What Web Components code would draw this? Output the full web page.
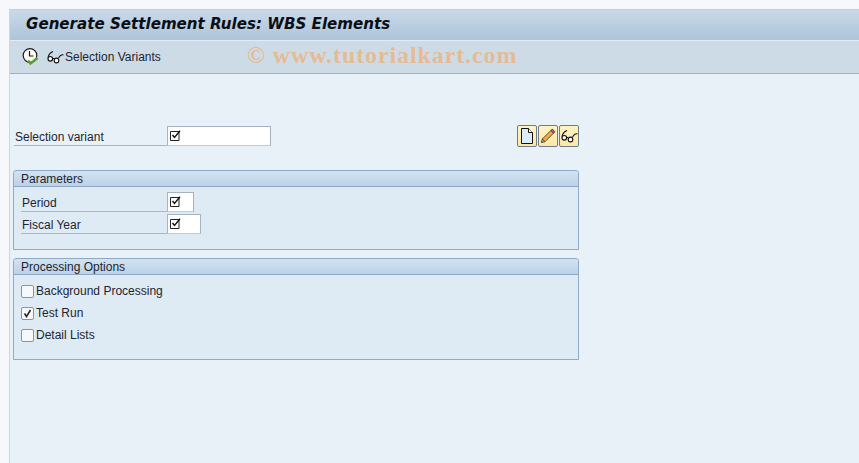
<!DOCTYPE html>
<html>
<head>
<meta charset="utf-8">
<style>
    html, body { margin: 0; height: 100%; }
    body {
        background: #f6f8fb;
        font: 12px "Liberation Sans", sans-serif;
        color: #1c2530;
        overflow: hidden;
    }
</style>
</head>
<body>
<sap-window>
    <sap-title slot="title">Generate Settlement Rules: WBS Elements</sap-title>
    <sap-toolbar slot="toolbar"></sap-toolbar>
    <sap-variant-row></sap-variant-row>
    <sap-group heading="Parameters" style="--group-h: 80px; --group-top: 23px">
        <sap-field label="Period" width="27"></sap-field>
        <sap-field label="Fiscal Year" width="34"></sap-field>
    </sap-group>
    <sap-group heading="Processing Options" style="--group-h: 102px; --group-top: 8px">
        <sap-check label="Background Processing"></sap-check>
        <sap-check label="Test Run" checked></sap-check>
        <sap-check label="Detail Lists"></sap-check>
    </sap-group>
</sap-window>

<script>
const ICONS = {
    required: `<svg width="11" height="11" viewBox="0 0 11 11"><path d="M.5 1.5h8.5v9H.5z" fill="#fff" stroke="#222"/><path d="M2.5 5l2 2.500L10 .8" fill="none" stroke="#111" stroke-width="1.400"/></svg>`,
    execute: `<svg width="18" height="18" viewBox="0 0 18 18"><circle cx="8" cy="7.500" r="6.800" fill="#fdfdf5" stroke="#1a1a1a" stroke-width="1.200"/><path d="M7.500 3v5h4" fill="none" stroke="#1a1a1a" stroke-width="1.200"/><path d="M6 12.500l2.500 3 7-5.500" fill="none" stroke="#5aa02c" stroke-width="2.600"/></svg>`,
    glasses: `<svg width="17" height="14" viewBox="0 0 17 14"><path d="M1 7.500C1.500 5 3.500 2.500 6 1.500M11.500 8C13 5.500 14 4 16.500 5" fill="none" stroke="#111" stroke-width="1.100"/><ellipse cx="3.300" cy="8.800" rx="2.300" ry="2.300" fill="#fff" stroke="#111" stroke-width="1.100"/><ellipse cx="9.500" cy="10.500" rx="2.300" ry="2.400" fill="#fff" stroke="#111" stroke-width="1.100"/><path d="M5.500 8l2 1" stroke="#111"/></svg>`,
    page: `<svg width="14" height="16" viewBox="0 0 14 16"><path d="M1.500.5h7l4 4v11h-11z" fill="#dcecf8" stroke="#111"/><path d="M8.500.5v4h4" fill="#fff" stroke="#111"/></svg>`,
    pencil: `<svg width="16" height="17" viewBox="0 0 16 17"><path d="M1.500 15.500l.8-3.500 2.700 2.700z" fill="#f5dcb0" stroke="#222" stroke-width=".8"/><path d="M2.300 12L10.800 3.500l2.700 2.700L5 14.700z" fill="#f3ac3a" stroke="#333" stroke-width=".8"/><path d="M10.800 3.500l1.500-1.500 2.700 2.700-1.500 1.500z" fill="#d9556a" stroke="#333" stroke-width=".8"/><path d="M1.500 15.500l1.200-.4-.8-.8z" fill="#111"/></svg>`
};

class SapWindow extends HTMLElement {
    constructor() {
        super();
        this.attachShadow({ mode: 'open' }).innerHTML = `
            <style>
                :host { display: flex; flex-direction: column; height: 454px; margin: 9px 0 0 9px; border-left: 1px solid #cdd6df; border-top: 1px solid #c4ced8; background: #e9f1f8; position: relative; }
                .content { padding: 50px 0 0 3px; width: 566px; }
            </style>
            <slot name="title"></slot>
            <slot name="toolbar"></slot>
            <div class="content"><slot></slot></div>
        `;
    }
}

class SapTitle extends HTMLElement {
    constructor() {
        super();
        this.attachShadow({ mode: 'open' }).innerHTML = `
            <style>
                :host { display: flex; align-items: center; height: 31px; padding: 0 0 3px 16px; box-sizing: border-box; background: linear-gradient(#c9d9e8, #aec4da); border-bottom: 1px solid #e4edf5; font: italic bold 15.100px "DejaVu Sans", sans-serif; color: #0b0f14; white-space: nowrap; }
            </style>
            <slot></slot>
        `;
    }
}

class SapToolbar extends HTMLElement {
    constructor() {
        super();
        this.attachShadow({ mode: 'open' }).innerHTML = `
            <style>
                :host { display: flex; align-items: center; height: 33px; box-sizing: border-box; padding: 0 0 1px 12px; background: #cddbe7; border-bottom: 1px solid #9fb1c4; position: relative; color: #1c2530; }
                .run { margin-right: 7px; display: flex; }
                .variants { display: flex; align-items: center; gap: 1px; }
                .mark { position: absolute; left: 237px; top: 1px; font: bold 24px "Liberation Serif", serif; color: #e6bb94; letter-spacing: .9px; white-space: nowrap; }
            </style>
            <span class="run">${ICONS.execute}</span>
            <span class="variants">${ICONS.glasses}<span>Selection Variants</span></span>
            <span class="mark">© www.tutorialkart.com</span>
        `;
    }
}

class SapField extends HTMLElement {
    constructor() {
        super();
        const label = this.getAttribute('label');
        const width = this.getAttribute('width');
        this.attachShadow({ mode: 'open' }).innerHTML = `
            <style>
                :host { display: flex; align-items: flex-end; height: 20px; margin-bottom: 2px; }
                .label { width: var(--label-w, 146px); height: 19px; line-height: 21px; box-sizing: border-box; padding-left: 1px; border-bottom: 1px solid #a9b7c5; white-space: nowrap; }
                .input { width: ${width}px; height: 20px; box-sizing: border-box; background: #fff; border: 1px solid #a6b3c0; border-bottom-color: #c3ccd5; padding: 3px 0 0 2px; line-height: 0; }
            </style>
            <span class="label">${label}</span>
            <span class="input">${ICONS.required}</span>
        `;
    }
}

class SapVariantRow extends HTMLElement {
    constructor() {
        super();
        this.attachShadow({ mode: 'open' }).innerHTML = `
            <style>
                :host { display: flex; align-items: center; justify-content: space-between; height: 23px; }
                sap-field { --label-w: 153px; margin: 0; padding-left: 1px; }
                .buttons { display: flex; gap: 1px; }
            </style>
            <sap-field label="Selection variant" width="104"></sap-field>
            <span class="buttons">
                <sap-icon-button icon="page"></sap-icon-button>
                <sap-icon-button icon="pencil"></sap-icon-button>
                <sap-icon-button icon="glasses"></sap-icon-button>
            </span>
        `;
    }
}

class SapIconButton extends HTMLElement {
    constructor() {
        super();
        this.attachShadow({ mode: 'open' }).innerHTML = `
            <style>
                :host { display: flex; align-items: center; justify-content: center; width: 20px; height: 22px; box-sizing: border-box; background: linear-gradient(#fff3c4, #fde7a5); border: 1px solid #6f7c88; border-radius: 2px; }
                svg { display: block; }
            </style>
            ${ICONS[this.getAttribute('icon')]}
        `;
    }
}

class SapGroup extends HTMLElement {
    constructor() {
        super();
        this.attachShadow({ mode: 'open' }).innerHTML = `
            <style>
                :host { display: block; height: var(--group-h); margin-top: var(--group-top); box-sizing: border-box; background: #deeaf4; border: 1px solid #8faac4; border-radius: 3px 3px 0 0; }
                .head { height: 16px; line-height: 17px; box-sizing: border-box; padding-left: 7px; background: linear-gradient(#d3e2f0, #bcd2e7); border-bottom: 1px solid #8faac4; border-radius: 3px 3px 0 0; }
                .body { padding: 5px 0 0 7px; }
            </style>
            <div class="head">${this.getAttribute('heading')}</div>
            <div class="body"><slot></slot></div>
        `;
    }
}

class SapCheck extends HTMLElement {
    constructor() {
        super();
        const checked = this.hasAttribute('checked');
        this.attachShadow({ mode: 'open' }).innerHTML = `
            <style>
                :host { display: flex; align-items: center; height: 22px; gap: 2px; white-space: nowrap; }
                .box { width: 13px; height: 13px; box-sizing: border-box; background: #f6f8fb; border: 1px solid #8c949c; border-radius: 2px; display: flex; align-items: center; justify-content: center; }
                .box svg { display: block; }
            </style>
            <span class="box">${checked ? '<svg width="9" height="9" viewBox="0 0 9 9"><path d="M1.500 4.500l2 3L7.500 1" fill="none" stroke="#222" stroke-width="1.500"/></svg>' : ''}</span>
            <span>${this.getAttribute('label')}</span>
        `;
    }
}

customElements.define('sap-field', SapField);
customElements.define('sap-icon-button', SapIconButton);
customElements.define('sap-variant-row', SapVariantRow);
customElements.define('sap-group', SapGroup);
customElements.define('sap-check', SapCheck);
customElements.define('sap-title', SapTitle);
customElements.define('sap-toolbar', SapToolbar);
customElements.define('sap-window', SapWindow);
</script>
</body>
</html>
